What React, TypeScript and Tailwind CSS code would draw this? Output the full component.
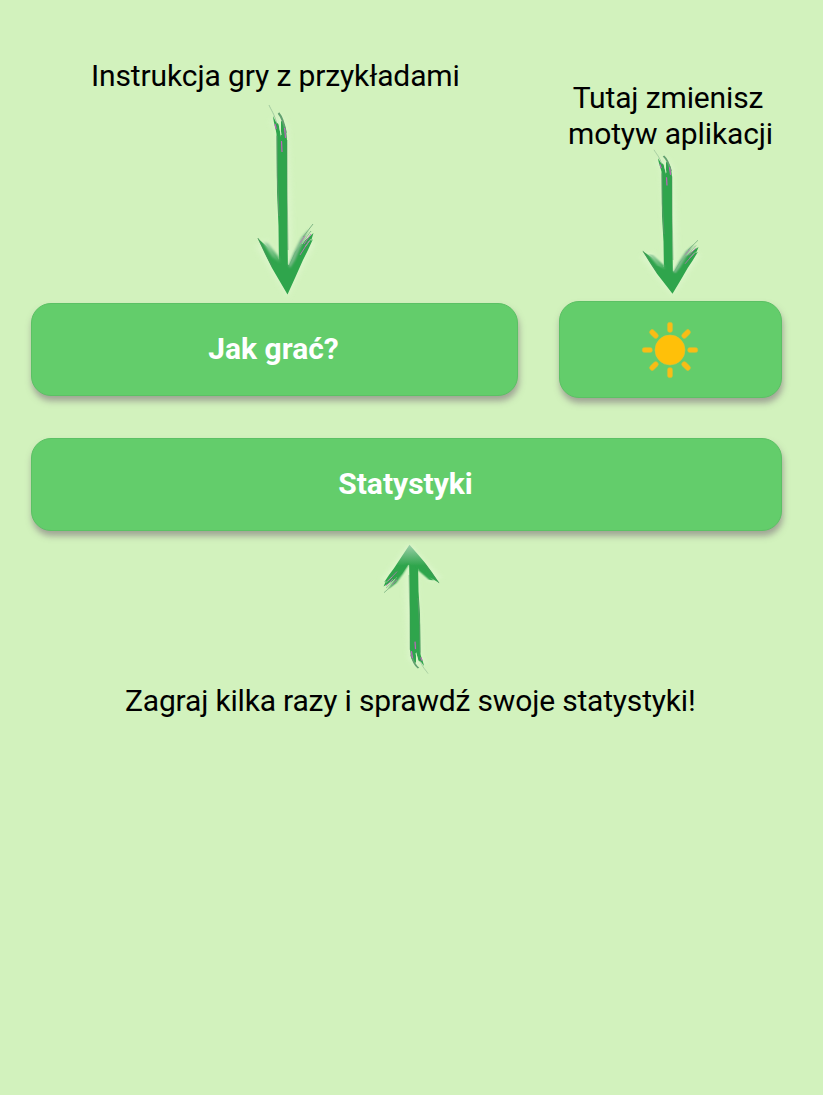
import type { ReactNode } from "react";

type ArrowProps = { id: string; className: string; fadedTip?: boolean };

/* Brush-stroke arrow, drawn pointing down; it stretches vertically to its box. */
function BrushArrow({ id, className, fadedTip = false }: ArrowProps) {
  return (
    <svg viewBox="0 0 80 200" preserveAspectRatio="none" className={className} fill="none" aria-hidden="true">
      <defs>
        <filter id={`${id}-glow`} x="-30%" y="-10%" width="160%" height="120%">
          <feGaussianBlur stdDeviation="2.6" />
        </filter>
        <filter id={`${id}-soft`} x="-20%" y="-20%" width="140%" height="140%">
          <feGaussianBlur stdDeviation="0.9" />
        </filter>
        <linearGradient id={`${id}-head`} x1="0" y1="138" x2="0" y2="195" gradientUnits="userSpaceOnUse">
          <stop offset="0" stopColor="#2fa54c" />
          <stop offset="0.45" stopColor="#2fa54c" />
          <stop offset="1" stopColor={fadedTip ? "#9fd0ac" : "#2fa54c"} />
        </linearGradient>
        <linearGradient id={`${id}-left`} x1="18" y1="140" x2="36" y2="166" gradientUnits="userSpaceOnUse">
          <stop offset="0" stopColor={fadedTip ? "#2fa54c" : "#b5dcb5"} />
          <stop offset="1" stopColor="#2fa54c" />
        </linearGradient>
      </defs>
      <path
        d="M30 18 L37 28 L40 100 L41 170 M16 143 L42 184 L65 140"
        stroke="#e1f8d1"
        strokeWidth="13"
        opacity="0.6"
        filter={`url(#${id}-glow)`}
      />
      <path
        d="M28 16 L31 22 L33.5 24 L36 37 L36 21 L38.5 22 L41 29 L42 40 L42 100 L43 174 L34 170 L33.5 126 L32 92 L31.5 34 C31 29 29 25 28 16Z"
        fill="#2fa54c"
      />
      <path d="M24 5 C26 10 29 13 32 24" stroke="#8cb791" strokeWidth="0.7" />
      <path d="M33.5 13 C37 17 39 23 40.8 33" stroke="#62a070" strokeWidth="2" />
      <path d="M32 17 L34 23 L36.2 35" stroke="#d3efc5" strokeWidth="0.9" />
      <path d="M30 24 L31.2 29 M36.5 41 L37 52 M39.5 28 L40.6 38" stroke="#c065bc" strokeWidth="1.2" />
      <path d="M32 36 L32.3 76 L34 116" stroke="#71977a" strokeWidth="0.7" />
      <path d="M42 40 L42.2 90 L43 150" stroke="#4b8d5c" strokeWidth="0.5" />
      <path
        d="M12.5 138 L18 143 L24 148 L35 161 L44 165 L50 152 L57 143 L68.5 133 L66 141 L68 139 L63 150 L58 160 L50 178 L42.5 194.5 L34 180 L27 168 L20 154Z"
        fill={`url(#${id}-head)`}
      />
      <path d="M18 142 L23 143 L34 157 L35 163 L27 157Z" fill={`url(#${id}-left)`} filter={`url(#${id}-soft)`} />
      <path
        d="M43.5 165 L49 152 L56 138 L64 129 L58 142 L50 160 L45 168Z"
        fill={fadedTip ? "#2fa54c" : "#79b987"}
        filter={`url(#${id}-soft)`}
      />
      <path d="M58 137 L68 124 M55 147 L66 131" stroke="#75ae7e" strokeWidth="0.9" />
      <path d="M57 144 L66 132 M60 147 L66 139" stroke="#d3efc5" strokeWidth="0.6" />
      <path d="M55 143 L60 136 M55 155 L64 141 M59 144 L66 134" stroke="#c071bb" strokeWidth="0.9" />
      <path d="M13 138 L20 152 L27 166" stroke="#528c61" strokeWidth="0.6" />
    </svg>
  );
}

function MenuButton({ className, children }: { className: string; children: ReactNode }) {
  return (
    <button
      type="button"
      className={`flex items-center justify-center rounded-[20px] border border-[#5bc164] bg-[#63cd6b] text-[30px] font-bold leading-9 text-white shadow-[1px_5px_6px_rgba(110,90,110,0.5)] ${className}`}
    >
      {children}
    </button>
  );
}

function SunIcon() {
  return (
    <svg viewBox="-30 -30 60 60" className="h-[60px] w-[60px]" aria-label="Motyw">
      <circle r="15" fill="#ffc009" stroke="#dfc337" strokeWidth="0.6" />
      {[0, 45, 90, 135, 180, 225, 270, 315].map((angle) => (
        <rect
          key={angle}
          x="-2.6"
          y="-27.8"
          width="5.2"
          height="10.2"
          rx="2.4"
          fill="#f9bd16"
          stroke="#c3c13d"
          strokeWidth="0.5"
          transform={`rotate(${angle})`}
        />
      ))}
    </svg>
  );
}

export default function App() {
  return (
    <main className="flex min-h-[1095px] w-[823px] flex-col bg-[#d2f2bd] pl-[31px] pr-[41px] font-['Roboto',sans-serif] text-[30px] leading-9 text-black">
      <div className="flex h-[301px] gap-10">
        <div className="flex w-[488px] flex-col pt-[58px]">
          <p className="ml-[60px] whitespace-nowrap tracking-[-0.12px]">Instrukcja gry z przykładami</p>
          <BrushArrow id="guide" className="ml-[214px] mt-[6px] h-[200px] w-[80px] shrink-0" />
        </div>
        <div className="flex w-[223px] flex-col pt-20">
          <p className="whitespace-nowrap text-center tracking-[-0.12px]">
            <span className="mr-[5px]">Tutaj zmienisz</span>
            <br />
            motyw aplikacji
          </p>
          <BrushArrow id="theme" className="-mt-[6px] ml-[71px] h-[152px] w-[80px] shrink-0" />
        </div>
      </div>

      <div className="flex items-center gap-[41px]">
        <MenuButton className="h-[93px] w-[487px] pb-px pr-[2px]">Jak grać?</MenuButton>
        <MenuButton className="h-[97px] w-[223px] pr-px">
          <SunIcon />
        </MenuButton>
      </div>
      <MenuButton className="mt-10 h-[93px] w-full pb-px pr-[2px]">Statystyki</MenuButton>

      <BrushArrow id="stats" fadedTip className="ml-[341px] mt-[10px] h-[136px] w-[80px] shrink-0 rotate-180" />
      <p className="ml-[94px] mt-[6px] whitespace-nowrap tracking-[-0.18px]">
        Zagraj kilka razy i sprawdź swoje statystyki!
      </p>
    </main>
  );
}
